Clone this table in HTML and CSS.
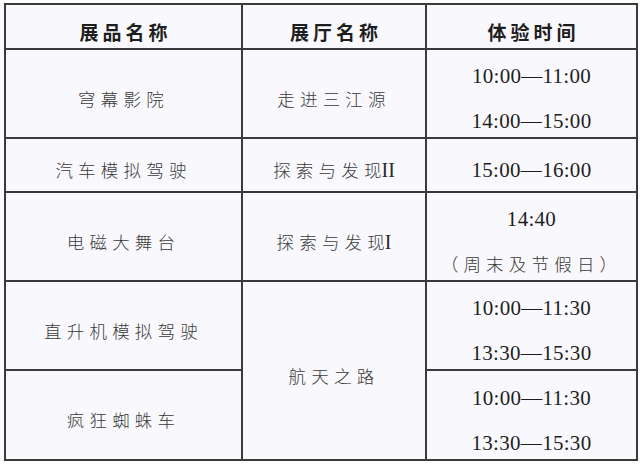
FILE: index.html
```html
<!DOCTYPE html>
<html lang="zh">
<head>
<meta charset="utf-8">
<title>展品体验时间</title>
<link rel="stylesheet" href="styles.css">
</head>
<body>
<table class="schedule">
  <colgroup>
    <col class="c1">
    <col class="c2">
    <col class="c3">
  </colgroup>
  <thead>
    <tr class="r-head">
      <th>展品名称</th>
      <th>展厅名称</th>
      <th>体验时间</th>
    </tr>
  </thead>
  <tbody>
    <tr class="r-tall">
      <td class="cn">穹幕影院</td>
      <td class="cn">走进三江源</td>
      <td class="time"><span class="line">10:00—11:00</span><span class="line">14:00—15:00</span></td>
    </tr>
    <tr class="r-short">
      <td class="cn">汽车模拟驾驶</td>
      <td class="cn">探索与发<span class="tight">现</span><span class="roman">II</span></td>
      <td class="time"><span class="line">15:00—16:00</span></td>
    </tr>
    <tr class="r-tall">
      <td class="cn">电磁大舞台</td>
      <td class="cn">探索与发<span class="tight">现</span><span class="roman">I</span></td>
      <td class="time"><span class="line">14:40</span><span class="line note">（周末及节假日）</span></td>
    </tr>
    <tr class="r-tall">
      <td class="cn">直升机模拟驾驶</td>
      <td class="cn" rowspan="2">航天之路</td>
      <td class="time"><span class="line">10:00—11:30</span><span class="line">13:30—15:30</span></td>
    </tr>
    <tr class="r-last">
      <td class="cn">疯狂蜘蛛车</td>
      <td class="time"><span class="line">10:00—11:30</span><span class="line">13:30—15:30</span></td>
    </tr>
  </tbody>
</table>
</body>
</html>
```

FILE: styles.css
```css
html, body {
  margin: 0;
  padding: 0;
  background: #fcfcfd;
}

body {
  padding: 3px 0 0 4px;
  font-family: "Noto Sans CJK SC", "Liberation Serif", sans-serif;
  color: #2e2e2e;
}

.schedule {
  border-collapse: collapse;
  table-layout: fixed;
  width: 632px;
  background: #f9f9fd;
  border: 2px solid #3a3a3a;
}

.c1 { width: 237px; }
.c2 { width: 184px; }
.c3 { width: 211px; }

.schedule th,
.schedule td {
  border: 2px solid #3a3a3a;
  text-align: center;
  vertical-align: middle;
  padding: 10px 0 0 0;
}

.r-head { height: 45px; }
.r-tall { height: 89px; }
.r-short { height: 54px; }
.r-last { height: 90px; }

.schedule th {
  font-size: 19px;
  font-weight: 700;
  letter-spacing: 4px;
  line-height: 24px;
  color: #1e1e1e;
  padding-left: 4px;
}

.cn {
  font-size: 17.5px;
  font-weight: 300;
  letter-spacing: 5.2px;
  line-height: 24px;
  color: #3a3a3a;
  padding-left: 5px;
}

.tight {
  letter-spacing: 0;
}

.roman {
  font-family: "Liberation Serif", serif;
  font-size: 20px;
  letter-spacing: 0;
  color: #2a2a2a;
}

.time {
  font-family: "Liberation Serif", serif;
  font-size: 21px;
  letter-spacing: 0.3px;
  color: #1e1e1e;
}

.line {
  display: block;
  line-height: 24px;
}

.line + .line {
  margin-top: 21px;
}

.note {
  font-family: "Noto Sans CJK SC", sans-serif;
  font-size: 17.5px;
  font-weight: 300;
  letter-spacing: 5.2px;
  color: #3a3a3a;
}
```
